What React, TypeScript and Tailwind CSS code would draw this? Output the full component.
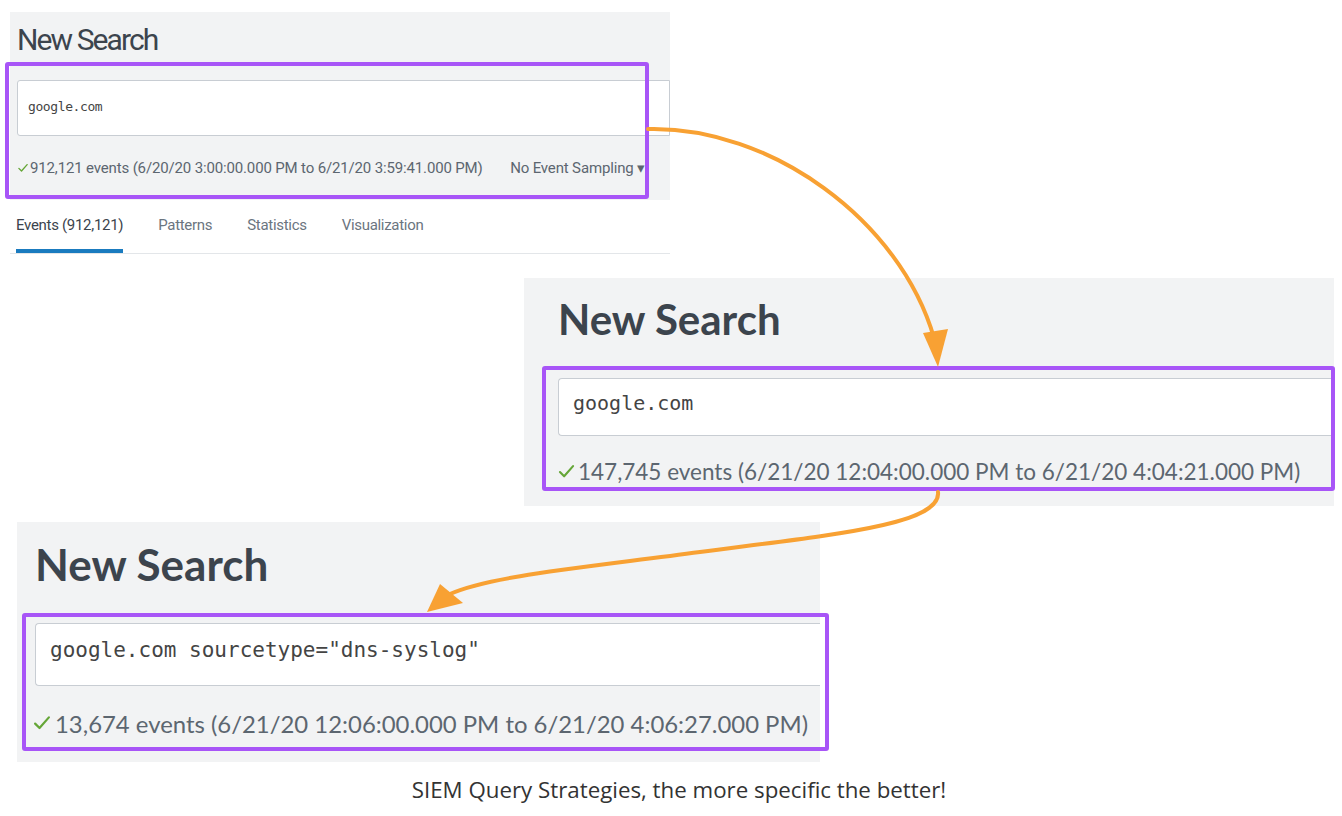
import React from 'react';

const narrow = "font-['Roboto','Liberation_Sans',sans-serif]";
const sans = "font-['Lato','Open_Sans',sans-serif]";
const mono = "font-['DejaVu_Sans_Mono','Liberation_Mono',monospace]";

function Check({ size }: { size: number }) {
  return (
    <svg width={size} height={size} viewBox="0 0 16 16" className="shrink-0">
      <path d="M2.5 8.5 L6 12 L13.5 3.5" fill="none" stroke="#65a637" strokeWidth="1.8" strokeLinecap="round" strokeLinejoin="round" />
    </svg>
  );
}

function Highlight({ className }: { className: string }) {
  return <div className={`absolute border-4 border-[#a855f7] rounded-[3px] ${className}`} />;
}

export default function App() {
  return (
    <div className="relative w-[1342px] h-[816px] bg-white overflow-hidden">
      {/* first search, small capture */}
      <div className="ml-[10px] pt-[12px] w-[660px]">
        <div className="bg-[#f2f3f4] h-[188px] pl-[7px] pt-[11px]">
          <h1 className={`${narrow} text-[30px] leading-[34px] tracking-[-1.9px] text-[#3c444d]`}>New Search</h1>
          <div className="mt-[23px] h-[56px] bg-white border border-[#c8cdd3] rounded-l-[3px] flex items-center pl-[10px] pb-[3px]">
            <span className={`${mono} text-[13px] tracking-[-0.4px] text-[#444]`}>google.com</span>
          </div>
          <div className={`${narrow} mt-[21px] flex items-center justify-between pr-[25px] text-[15px] tracking-[-0.15px] text-[#5c6670] whitespace-nowrap`}>
            <div className="flex items-center gap-[1px]">
              <Check size={12} />
              <span>912,121 events (6/20/20 3:00:00.000 PM to 6/21/20 3:59:41.000 PM)</span>
            </div>
            <span>No Event Sampling ▾</span>
          </div>
        </div>
        <div className={`${narrow} flex gap-[35px] pl-[6px] pt-[14px] text-[15px] tracking-[-0.3px] border-b border-[#e3e6e9] whitespace-nowrap`}>
          <div className="text-[#3c444d] pb-[12px] border-b-[4px] border-[#1a7bbf]">Events (912,121)</div>
          <div className="text-[#6b7580]">Patterns</div>
          <div className="text-[#6b7580]">Statistics</div>
          <div className="text-[#6b7580]">Visualization</div>
        </div>
      </div>

      {/* second search */}
      <div className="ml-[524px] mt-[24px] w-[810px] h-[228px] bg-[#f2f3f4] pl-[34px] pt-[17px]">
        <h1 className={`${sans} font-bold text-[42px] leading-[48px] text-[#3c444d]`}>New Search</h1>
        <div className="mt-[35px] h-[58px] bg-white border border-[#c8cdd3] border-r-0 rounded-l-[4px] flex items-center pl-[14px] pb-[8px]">
          <span className={`${mono} text-[20px] text-[#444]`}>google.com</span>
        </div>
        <div className={`${sans} mt-[19px] flex items-center gap-[2px] -ml-[1px] text-[22.5px] text-[#5c6670] whitespace-nowrap`}>
          <Check size={19} />
          <span>147,745 events (6/21/20 12:04:00.000 PM to 6/21/20 4:04:21.000 PM)</span>
        </div>
      </div>

      {/* third search */}
      <div className="ml-[17px] mt-[16px] w-[803px] h-[240px] bg-[#f2f3f4] pl-[18px] pt-[17px]">
        <h1 className={`${sans} font-bold text-[44px] leading-[50px] text-[#3c444d]`}>New Search</h1>
        <div className="mt-[34px] h-[63px] bg-white border border-[#c8cdd3] border-r-0 rounded-l-[4px] flex items-center pl-[14px] pb-[6px]">
          <span className={`${mono} text-[21px] text-[#444]`}>google.com sourcetype="dns-syslog"</span>
        </div>
        <div className={`${sans} mt-[20px] flex items-center gap-[3px] -ml-[3px] text-[23.9px] text-[#5c6670] whitespace-nowrap`}>
          <Check size={20} />
          <span>13,674 events (6/21/20 12:06:00.000 PM to 6/21/20 4:06:27.000 PM)</span>
        </div>
      </div>

      <p className="mt-[11px] text-center pl-[16px] font-['Open_Sans',sans-serif] text-[22.3px] text-[#333]">
        SIEM Query Strategies, the more specific the better!
      </p>

      {/* annotations */}
      <Highlight className="left-[5px] top-[62px] w-[644px] h-[137px]" />
      <Highlight className="left-[542px] top-[366px] w-[793px] h-[125px]" />
      <Highlight className="left-[22px] top-[613px] w-[807px] h-[138px]" />

      <svg className="absolute inset-0 pointer-events-none" width="1342" height="816" viewBox="0 0 1342 816">
        <path d="M 648 129 C 770 126, 900 220, 934 338" fill="none" stroke="#f8a133" strokeWidth="4" strokeLinecap="round" />
        <polygon points="938,367 923,333 948,329" fill="#f8a133" />
        <path d="M 938 492 C 942 525, 830 535, 700 552 C 580 568, 490 576, 450 594" fill="none" stroke="#f8a133" strokeWidth="4" strokeLinecap="round" />
        <polygon points="427,612 440,584 463,603" fill="#f8a133" />
      </svg>
    </div>
  );
}
